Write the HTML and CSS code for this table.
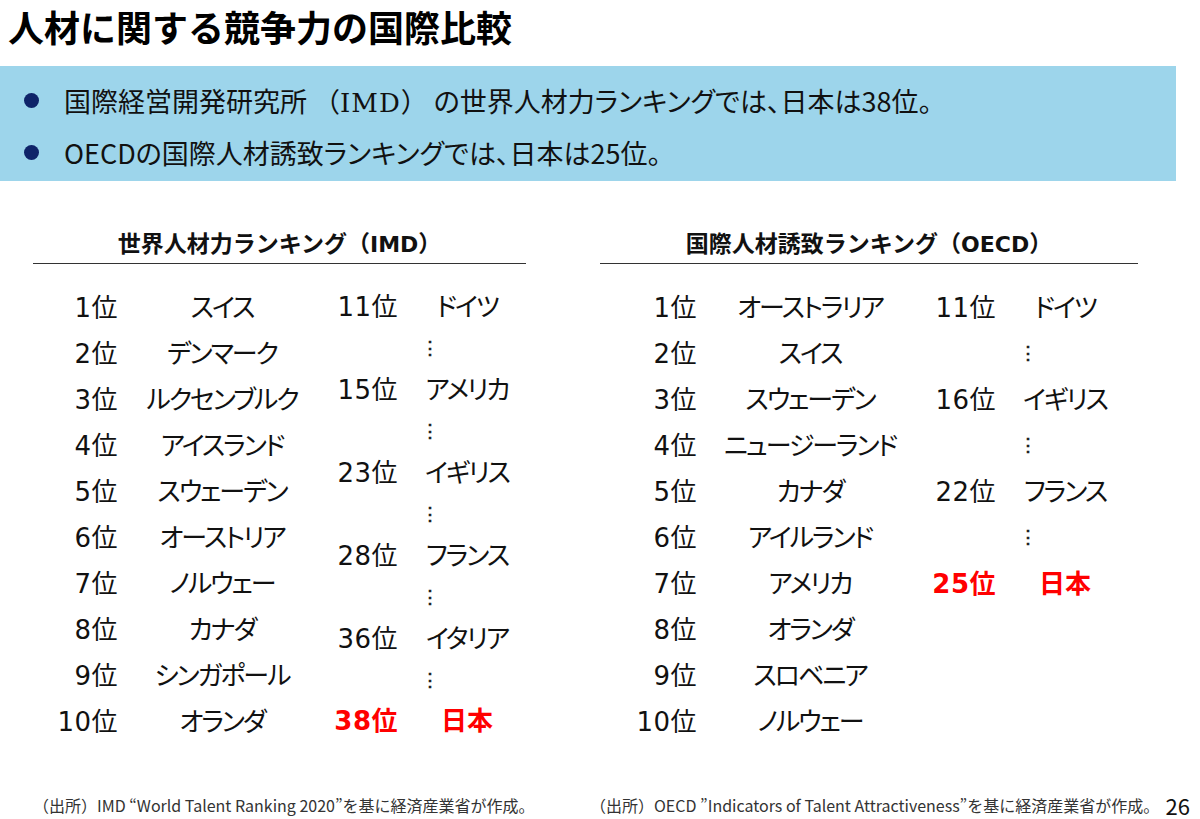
FILE: index.html
```html
<!DOCTYPE html>
<html lang="ja">
<head>
<meta charset="utf-8">
<title>人材に関する競争力の国際比較</title>
<link rel="stylesheet" href="styles.css">
</head>
<body>
<h1 class="title">人材に関する競争力の国際比較</h1>

<section class="summary">
  <ul class="bullets">
    <li>国際経営開発研究所<span class="abbr">（<span class="latin">IMD</span>）</span>の世界人材力ランキングでは、日本は38位。</li>
    <li>OECDの国際人材誘致ランキングでは、日本は25位。</li>
  </ul>
</section>

<main class="tables">
  <section class="ranking ranking--imd">
    <h2 class="ranking__title">世界人材力ランキング（<span class="latin">IMD</span>）</h2>
    <div class="ranking__body">
      <div class="list list--main">
        <span class="rank">1位</span><span class="name">スイス</span>
        <span class="rank">2位</span><span class="name">デンマーク</span>
        <span class="rank">3位</span><span class="name">ルクセンブルク</span>
        <span class="rank">4位</span><span class="name">アイスランド</span>
        <span class="rank">5位</span><span class="name">スウェーデン</span>
        <span class="rank">6位</span><span class="name">オーストリア</span>
        <span class="rank">7位</span><span class="name">ノルウェー</span>
        <span class="rank">8位</span><span class="name">カナダ</span>
        <span class="rank">9位</span><span class="name">シンガポール</span>
        <span class="rank">10位</span><span class="name">オランダ</span>
      </div>
      <div class="list list--sub list--tight">
        <span class="rank">11位</span><span class="name">ドイツ</span>
        <span class="gap"></span><span class="dots">⋮</span>
        <span class="rank">15位</span><span class="name">アメリカ</span>
        <span class="gap"></span><span class="dots">⋮</span>
        <span class="rank">23位</span><span class="name">イギリス</span>
        <span class="gap"></span><span class="dots">⋮</span>
        <span class="rank">28位</span><span class="name">フランス</span>
        <span class="gap"></span><span class="dots">⋮</span>
        <span class="rank">36位</span><span class="name">イタリア</span>
        <span class="gap"></span><span class="dots">⋮</span>
        <span class="rank highlight">38位</span><span class="name highlight">日本</span>
      </div>
    </div>
  </section>

  <section class="ranking ranking--oecd">
    <h2 class="ranking__title">国際人材誘致ランキング（<span class="latin">OECD</span>）</h2>
    <div class="ranking__body">
      <div class="list list--main">
        <span class="rank">1位</span><span class="name">オーストラリア</span>
        <span class="rank">2位</span><span class="name">スイス</span>
        <span class="rank">3位</span><span class="name">スウェーデン</span>
        <span class="rank">4位</span><span class="name">ニュージーランド</span>
        <span class="rank">5位</span><span class="name">カナダ</span>
        <span class="rank">6位</span><span class="name">アイルランド</span>
        <span class="rank">7位</span><span class="name">アメリカ</span>
        <span class="rank">8位</span><span class="name">オランダ</span>
        <span class="rank">9位</span><span class="name">スロベニア</span>
        <span class="rank">10位</span><span class="name">ノルウェー</span>
      </div>
      <div class="list list--sub">
        <span class="rank">11位</span><span class="name">ドイツ</span>
        <span class="gap"></span><span class="dots">⋮</span>
        <span class="rank">16位</span><span class="name">イギリス</span>
        <span class="gap"></span><span class="dots">⋮</span>
        <span class="rank">22位</span><span class="name">フランス</span>
        <span class="gap"></span><span class="dots">⋮</span>
        <span class="rank highlight">25位</span><span class="name highlight">日本</span>
      </div>
    </div>
  </section>
</main>

<footer class="footer">
  <p class="source source--imd">（出所）IMD “World Talent Ranking 2020”を基に経済産業省が作成。</p>
  <p class="source source--oecd">（出所）OECD ”Indicators of Talent Attractiveness”を基に経済産業省が作成。</p>
  <span class="page">26</span>
</footer>
</body>
</html>
```

FILE: styles.css
```css
* {
  box-sizing: border-box;
}

html, body {
  margin: 0;
  padding: 0;
  background: #ffffff;
}

html {
  overflow: hidden;
}

body {
  width: 1200px;
  height: 819px;
  font-family: "Noto Sans CJK JP", "Noto Sans", sans-serif;
  color: #000000;
}

.latin {
  font-family: "DejaVu Sans", "Noto Sans CJK JP", sans-serif;
}

.title {
  margin: 0;
  height: 66px;
  padding-left: 8px;
  font-size: 36px;
  line-height: 52px;
  font-weight: 700;
  color: #000000;
}

.summary {
  width: 1176px;
  height: 115px;
  background: #9dd5eb;
  padding: 8px 0 3px 0;
}

.bullets {
  list-style: none;
  margin: 0;
  padding: 0;
}

.bullets li {
  display: flex;
  align-items: center;
  height: 52px;
  font-size: 27px;
  font-feature-settings: "palt";
  color: #111111;
  padding-left: 24px;
  white-space: nowrap;
}

.bullets li::before {
  content: "";
  width: 15px;
  height: 15px;
  border-radius: 50%;
  background: #0f2469;
  margin-right: 25px;
  flex: none;
}

.abbr {
  font-feature-settings: normal;
  margin: 0 6px;
}

.abbr .latin {
  font-family: "DejaVu Serif", "Noto Sans CJK JP", serif;
  font-size: 26px;
  letter-spacing: 1px;
}

.tables {
  display: flex;
  padding-top: 46px;
  height: 561px;
}

.ranking--imd {
  margin-left: 33px;
  width: 493px;
}

.ranking--oecd {
  margin-left: 74px;
  width: 538px;
}

.ranking__title {
  margin: 0;
  height: 37px;
  padding-bottom: 6px;
  line-height: 30px;
  font-size: 23px;
  font-weight: 700;
  text-align: center;
  border-bottom: 1px solid #333333;
  color: #111111;
  white-space: nowrap;
}

.ranking__title .latin {
  font-size: 22px;
}

.ranking__body {
  display: flex;
  margin-top: 18px;
}

.list {
  display: grid;
  grid-auto-rows: 46px;
  align-items: center;
  font-size: 26px;
  font-feature-settings: "palt";
  color: #111111;
  white-space: nowrap;
}

.ranking--imd .list--main {
  grid-template-columns: 85px 208px;
}

.ranking--imd .list--sub {
  grid-template-columns: 72px 138px;
}

.ranking--oecd .list--main {
  grid-template-columns: 97px 226px;
}

.ranking--oecd .list--sub {
  grid-template-columns: 73px 138px;
}

.list--tight {
  grid-auto-rows: 41.4px;
  margin-top: 2.3px;
}

.rank {
  text-align: right;
  font-family: "DejaVu Sans", "Noto Sans CJK JP", sans-serif;
  letter-spacing: 0.5px;
}

.name {
  text-align: center;
  letter-spacing: -2px;
}

.dots {
  width: 64px;
  text-align: center;
  font-size: 18px;
  line-height: 1;
  font-weight: 700;
  color: #222222;
}

.highlight {
  color: #ff0000;
  font-weight: 700;
}

.name.highlight {
  letter-spacing: 0;
}

.footer {
  display: flex;
  align-items: center;
  width: 1200px;
  height: 24px;
  margin-top: 51px;
  font-size: 16px;
  line-height: 24px;
  color: #333333;
}

.source {
  flex: none;
  margin: 0;
  white-space: nowrap;
}

.source--imd {
  margin-left: 33px;
  width: 557px;
}

.page {
  flex: none;
  margin-left: auto;
  margin-right: 10px;
  padding-left: 4px;
  font-size: 22px;
  line-height: 24px;
  color: #111111;
}
```
